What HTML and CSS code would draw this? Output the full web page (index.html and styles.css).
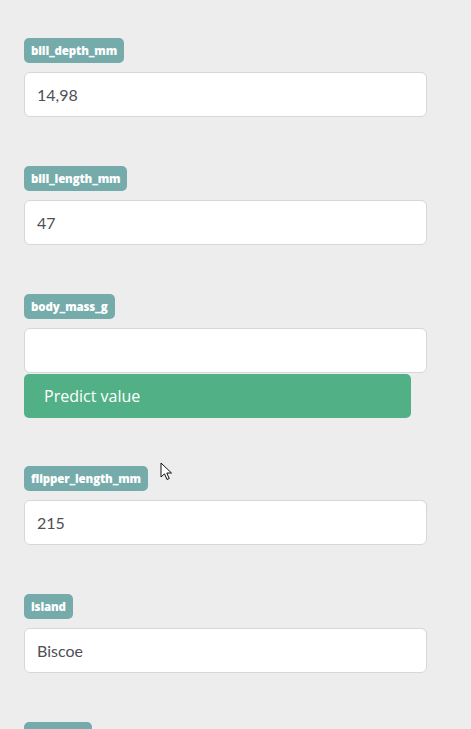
FILE: index.html
```html
<!DOCTYPE html>
<html>
<head>
<meta charset="utf-8">
<link rel="stylesheet" href="styles.css">
</head>
<body>
<div class="form">
  <div class="field">
    <span class="tag">bill_depth_mm</span>
    <div class="input">14,98</div>
  </div>
  <div class="field">
    <span class="tag">bill_length_mm</span>
    <div class="input">47</div>
  </div>
  <div class="field">
    <span class="tag">body_mass_g</span>
    <div class="input"></div>
    <button class="predict">Predict value</button>
  </div>
  <div class="field">
    <span class="tag">flipper_length_mm</span>
    <div class="input">215</div>
  </div>
  <div class="field">
    <span class="tag">island</span>
    <div class="input">Biscoe</div>
  </div>
  <div class="field">
    <span class="tag tag-wide">species</span>
    <div class="input">Gentoo</div>
  </div>
</div>
<svg class="cursor" width="14" height="20" viewBox="0 0 14 20"><path d="M1 1 L1 15 L4.5 11.8 L7 17.5 L9.2 16.5 L6.8 11 L11.5 11 Z" fill="#fff" stroke="#111" stroke-width="1" stroke-linejoin="miter"/></svg>
</body>
</html>
```
FILE: styles.css
```css
html, body {
  margin: 0;
  padding: 0;
  background: #ededed;
  overflow: hidden;
}
body {
  font-family: "Lato", "Open Sans", sans-serif;
  height: 729px;
}
.form {
  padding: 38px 44px 0 24px;
  display: flex;
  flex-direction: column;
  gap: 49px;
}
.field {
  display: flex;
  flex-direction: column;
  align-items: flex-start;
}
.tag {
  display: inline-block;
  box-sizing: border-box;
  background: #76abab;
  color: #fff;
  font-family: "Open Sans", "Liberation Sans", sans-serif;
  font-weight: 800;
  font-size: 11.5px;
  letter-spacing: -0.15px;
  height: 25px;
  line-height: 25px;
  padding: 0 7px;
  border-radius: 5px;
  margin-bottom: 9px;
}
.tag-wide {
  min-width: 68px;
}
.input {
  box-sizing: border-box;
  width: 403px;
  height: 45px;
  background: #fff;
  border: 1px solid #d6d6de;
  border-radius: 6px;
  padding: 0 12px;
  font-size: 16px;
  color: #4f4f55;
  line-height: 43px;
}
.predict {
  box-sizing: border-box;
  width: 387px;
  height: 44px;
  margin-top: 1px;
  margin-bottom: -1px;
  background: #52b087;
  color: #fff;
  border: none;
  border-radius: 5px;
  text-align: left;
  padding: 0 20px;
  font-family: "Open Sans", "Lato", sans-serif;
  font-size: 16px;
}
.cursor {
  position: absolute;
  left: 160px;
  top: 462px;
}
```
